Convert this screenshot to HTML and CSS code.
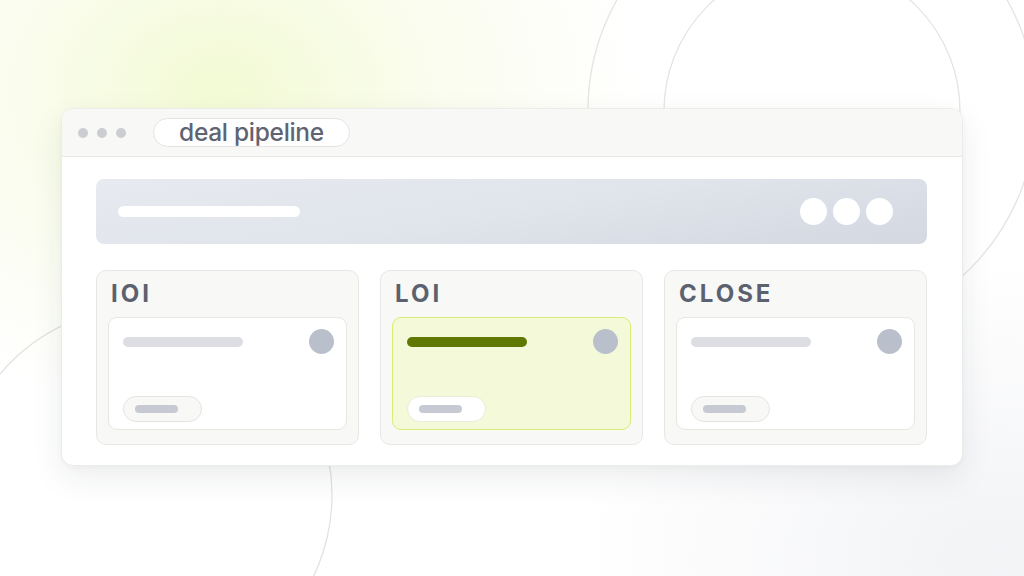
FILE: index.html
```html
<!DOCTYPE html>
<html>
<head>
<meta charset="utf-8">
<link rel="stylesheet" href="styles.css">
</head>
<body>
<div class="stage">
  <svg class="bg-rings" width="1024" height="576" viewBox="0 0 1024 576" aria-hidden="true">
    <circle cx="812" cy="110" r="224" fill="none" stroke="#e4e4e2" stroke-width="1.3"/>
    <circle cx="812" cy="111" r="148" fill="none" stroke="#e4e4e2" stroke-width="1.3"/>
    <circle cx="144" cy="495" r="188" fill="none" stroke="#e2e2de" stroke-width="1.3"/>
  </svg>
  <div class="window">
    <div class="titlebar">
      <div class="dots"><span></span><span></span><span></span></div>
      <div class="tab">deal pipeline</div>
    </div>
    <div class="content">
      <div class="header">
        <div class="header-line"></div>
        <div class="header-dots"><span></span><span></span><span></span></div>
      </div>
      <div class="columns">
        <div class="column">
          <div class="col-title">IOI</div>
          <div class="card">
            <div class="card-top"><div class="card-line"></div><div class="avatar"></div></div>
            <div class="pill"><div class="pill-bar"></div></div>
          </div>
        </div>
        <div class="column">
          <div class="col-title">LOI</div>
          <div class="card card-active">
            <div class="card-top"><div class="card-line"></div><div class="avatar"></div></div>
            <div class="pill"><div class="pill-bar"></div></div>
          </div>
        </div>
        <div class="column">
          <div class="col-title">CLOSE</div>
          <div class="card">
            <div class="card-top"><div class="card-line"></div><div class="avatar"></div></div>
            <div class="pill"><div class="pill-bar"></div></div>
          </div>
        </div>
      </div>
    </div>
  </div>
</div>
</body>
</html>
```
FILE: styles.css
```css
* { box-sizing: border-box; }
html, body { margin: 0; padding: 0; }
body {
  width: 1024px;
  height: 576px;
  overflow: hidden;
  font-family: Inter, "Noto Sans", "Liberation Sans", sans-serif;
  background:
    radial-gradient(ellipse 420px 330px at 220px 90px, rgba(242, 250, 210, 0.95), rgba(246, 251, 224, 0.55) 50%, rgba(255, 255, 255, 0) 100%),
    radial-gradient(ellipse 420px 300px at 1000px 560px, rgba(240, 241, 244, 0.85), rgba(255, 255, 255, 0) 100%),
    #ffffff;
}
.stage {
  position: relative;
  width: 1024px;
  height: 576px;
  padding: 108px 61px 0 61px;
}
.bg-rings {
  position: absolute;
  left: 0;
  top: 0;
  z-index: 0;
}
.window {
  position: relative;
  z-index: 1;
  width: 902px;
  height: 358px;
  background: #ffffff;
  border: 1px solid #ececea;
  border-radius: 12px;
  box-shadow: 0 12px 32px rgba(30, 35, 45, 0.08), 0 2px 6px rgba(30, 35, 45, 0.03);
  overflow: hidden;
  display: flex;
  flex-direction: column;
}
.titlebar {
  height: 48px;
  flex: none;
  background: #f8f8f6;
  border-bottom: 1px solid #e8e8e5;
  display: flex;
  align-items: center;
  padding-left: 16px;
}
.dots { display: flex; gap: 9px; }
.dots span {
  width: 10px;
  height: 10px;
  border-radius: 50%;
  background: #cbcdd3;
}
.tab {
  margin-left: 27px;
  height: 29px;
  width: 197px;
  border: 1px solid #e3e3e1;
  border-radius: 15px;
  background: #ffffff;
  display: flex;
  align-items: center;
  justify-content: center;
  font-size: 24.5px;
  font-weight: 500;
  color: #5f6472;
  letter-spacing: -0.3px;
  padding-bottom: 1px;
}
.content {
  flex: 1;
  padding: 22px 35px 0 34px;
  display: flex;
  flex-direction: column;
}
.header {
  height: 65px;
  border-radius: 8px;
  background: linear-gradient(170deg, #e7eaf0 0%, #e0e4eb 50%, #d3d8e1 100%);
  display: flex;
  align-items: center;
  justify-content: space-between;
  padding: 0 34px 0 22px;
}
.header-line {
  width: 182px;
  height: 11px;
  border-radius: 6px;
  background: #ffffff;
}
.header-dots { display: flex; gap: 6px; }
.header-dots span {
  width: 27px;
  height: 27px;
  border-radius: 50%;
  background: #ffffff;
}
.columns {
  margin-top: 26px;
  display: grid;
  grid-template-columns: repeat(3, 263px);
  gap: 21px;
}
.column {
  height: 175px;
  background: #f8f8f6;
  border: 1px solid #e7e7e4;
  border-radius: 10px;
  padding: 11px 11px 0 11px;
}
.col-title {
  font-size: 24px;
  line-height: 24px;
  font-weight: 700;
  letter-spacing: 3px;
  color: #5c6170;
  padding-left: 3px;
  height: 35px;
}
.card {
  height: 113px;
  background: #ffffff;
  border: 1px solid #e6e6e3;
  border-radius: 9px;
  display: flex;
  flex-direction: column;
  justify-content: space-between;
  padding: 11px 12px 7px 14px;
}
.card-top {
  display: flex;
  justify-content: space-between;
  align-items: flex-start;
}
.card-line {
  margin-top: 8px;
  width: 120px;
  height: 10px;
  border-radius: 5px;
  background: #dcdee3;
}
.avatar {
  width: 25px;
  height: 25px;
  border-radius: 50%;
  background: #b9c0cc;
}
.pill {
  width: 79px;
  height: 26px;
  border-radius: 13px;
  border: 1px solid #e4e4e1;
  background: #f8f8f6;
  display: flex;
  align-items: center;
  padding-left: 11px;
}
.pill-bar {
  width: 43px;
  height: 8px;
  border-radius: 4px;
  background: #c7cad3;
}
.card-active {
  background: #f3f9d9;
  border: 1.5px solid #d7ee74;
}
.card-active .card-line { background: #5f7900; }
.card-active .pill {
  background: #ffffff;
  border-color: #e9eed6;
}
```
